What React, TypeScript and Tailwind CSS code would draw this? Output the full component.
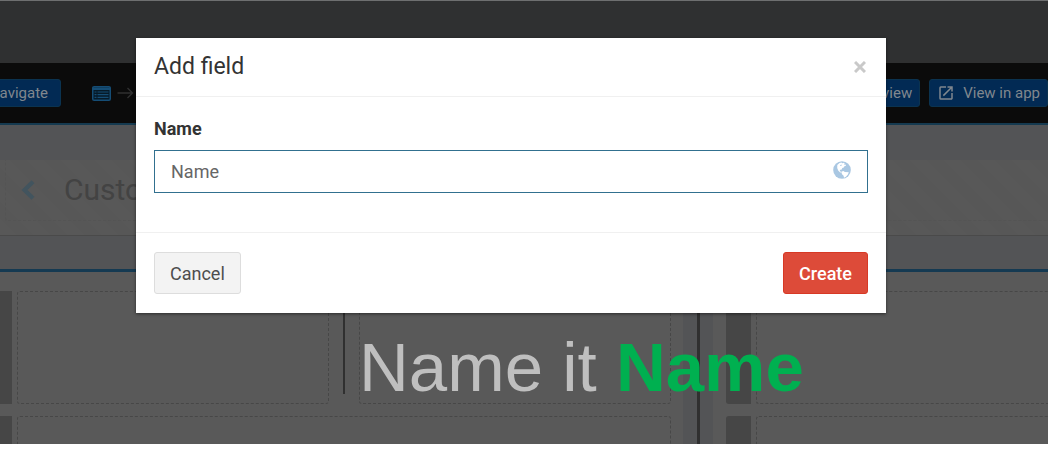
import React from "react";
import { MdOpenInNew } from "react-icons/md";

const toolbarButton =
  "flex h-7 shrink-0 items-center rounded-[3px] border border-[#0b3350] bg-[#022a54] text-[15px] whitespace-nowrap text-[#80878e]";

function ListIcon() {
  return (
    <svg viewBox="0 0 19 15" className="h-[15px] w-[19px] shrink-0" aria-hidden="true">
      <rect x="0.75" y="0.75" width="17.5" height="13.5" rx="1.3" fill="#061a28" stroke="#154d75" strokeWidth="1.5" />
      <path d="M0.5 1.5h18V4H0.5z" fill="#154d75" />
      <path d="M2.5 6h2M5.5 6h11M2.5 8.6h2M5.5 8.6h11M2.5 11.4h2M5.5 11.4h11" stroke="#154d75" strokeWidth="1.1" />
    </svg>
  );
}

function ArrowIcon() {
  return (
    <svg viewBox="0 0 17 14" className="h-3.5 w-[17px] shrink-0" fill="none" stroke="#303030" strokeWidth="1.4" aria-hidden="true">
      <path d="M0.5 7H15.5M10.5 2l5 5-5 5" />
    </svg>
  );
}

function ChevronIcon() {
  return (
    <svg viewBox="0 0 14 20" className="h-5 w-3.5" fill="none" stroke="#42545e" strokeWidth="4.2" aria-hidden="true">
      <path d="M12 1.7L3.5 10l8.500 8.300" />
    </svg>
  );
}

function GlobeIcon() {
  return (
    <svg viewBox="0 0 18 18" className="h-[18px] w-[18px] shrink-0" aria-hidden="true">
      <circle cx="9" cy="9" r="8.800" fill="#a9c7e2" />
      <path
        d="M4.300 4L6.500 2l2-.5.800.8 1.700-.5.700 1-.9 1 1.800-.3.400 1.300-1.600.5-.600 1.300-1.500.4-.6 1.400-1.500.4-.5 1.200 1.300.7.400 1-1.500-.5-1.700-1.700-1-2.500z"
        fill="#fff"
      />
      <path d="M8.300 10.800l2-.7 1.600.8 3.900.4-.9 2.100-2 2.300-1.900 1-.4-1.900-1.600-1.600z" fill="#fff" />
      <path d="M7 4.200l1.500-.6.300.9-1.300.5z" fill="#a9c7e2" />
    </svg>
  );
}

function CloseIcon() {
  return (
    <svg viewBox="0 0 12 12" className="h-3 w-3" fill="none" stroke="#c9c9c9" strokeWidth="3" aria-hidden="true">
      <path d="M1 1l10 10M11 1L1 11" />
    </svg>
  );
}

function Slot({ className = "" }: { className?: string }) {
  return <div className={`min-w-0 flex-1 rounded-[3px] border border-dashed border-[#474747] ${className}`} />;
}

function Toolbar() {
  return (
    <nav className="flex h-[62px] items-center justify-between overflow-hidden border-b-2 border-[#153a50] bg-[#0b0b0b]">
      <div className="flex items-center">
        <button type="button" className={`${toolbarButton} -ml-6 w-[85px] justify-end pr-3`}>
          Navigate
        </button>
        <div className="ml-[31px] flex items-center gap-1.5">
          <ListIcon />
          <ArrowIcon />
        </div>
      </div>
      <div className="flex items-center gap-[9px]">
        <button type="button" className={`${toolbarButton} px-[7px]`}>
          Preview
        </button>
        <button type="button" className={`${toolbarButton} gap-2 px-[7px]`}>
          <MdOpenInNew className="h-[18px] w-[18px]" aria-hidden="true" />
          View in app
        </button>
      </div>
    </nav>
  );
}

function Backdrop() {
  return (
    <div className="flex h-[444px] flex-col overflow-hidden bg-[#595959]">
      <div className="h-[63px] border-t border-[#6e6f70] bg-[#2f3031]" />
      <Toolbar />
      <div className="h-[35px] bg-[#535456]" />
      <header className="flex h-[76px] flex-col border-b border-[#4a4a4a] bg-[#585858] bg-[repeating-linear-gradient(45deg,#585858_0px,#585858_12px,#575757_12px,#575757_24px)] pb-3.5">
        <div className="ml-[5px] flex flex-1 items-center gap-[29px] rounded-bl-[3px] border-b border-l border-dashed border-[#545454] pl-[15px]">
          <ChevronIcon />
          <h1 className="text-[30px] leading-9 text-[#434343]">Custom</h1>
        </div>
      </header>
      <div className="h-9 border-b-[3px] border-[#153a52] bg-[#535456]" />
      <main className="flex min-h-0 flex-1">
        <section className="flex min-w-0 flex-1 flex-col gap-3 pt-[19px] pr-3">
          <div className="flex h-[113px] shrink-0 gap-[5px]">
            <div className="w-3 bg-[#464646]" />
            <div className="flex min-w-0 flex-1">
              <Slot />
              <div className="mx-3.5 mb-2.5 w-0.5 bg-[#303030]" />
              <Slot />
            </div>
          </div>
          <div className="flex h-[113px] shrink-0 gap-[5px]">
            <div className="w-3 bg-[#464646]" />
            <Slot />
          </div>
        </section>
        <div className="flex w-[30px] justify-center bg-[#535456]">
          <div className="w-[3px] bg-[#303030]" />
        </div>
        <section className="flex w-[335px] flex-col gap-3 pt-[19px] pl-[13px]">
          <div className="flex h-[113px] shrink-0 gap-[5px]">
            <div className="w-[25px] rounded-l-[3px] bg-[#464646]" />
            <Slot className="rounded-r-none border-r-0" />
          </div>
          <div className="flex h-[113px] shrink-0 gap-[5px]">
            <div className="w-[25px] rounded-l-[3px] bg-[#464646]" />
            <Slot className="rounded-r-none border-r-0" />
          </div>
        </section>
      </main>
    </div>
  );
}

function AddFieldDialog() {
  return (
    <form
      role="dialog"
      aria-labelledby="dialog-title"
      onSubmit={(event: React.FormEvent) => event.preventDefault()}
      className="w-[750px] bg-white text-[#333333] shadow-[0_1px_3px_rgba(0,0,0,0.5)]"
    >
      <div className="flex h-[59px] items-center justify-between border-b border-[#f0f0f0] pr-5 pl-[18px]">
        <h2 id="dialog-title" className="text-[23px] leading-7">
          Add field
        </h2>
        <button type="button" aria-label="Close">
          <CloseIcon />
        </button>
      </div>
      <div className="px-[18px] pt-5 pb-[39px]">
        <label htmlFor="field-name" className="mb-2.5 block text-[18px] leading-[23px] font-bold">
          Name
        </label>
        <div className="flex h-[43px] items-center border border-[#31708f] pr-4 pl-4">
          <input
            id="field-name"
            type="text"
            placeholder="Name"
            className="min-w-0 flex-1 bg-transparent text-[18px] outline-none placeholder:text-[#666666]"
          />
          <div className="pb-1">
            <GlobeIcon />
          </div>
        </div>
      </div>
      <div className="flex items-center justify-between border-t border-[#f0f0f0] px-[18px] py-[19px]">
        <button type="button" className="h-[42px] rounded-[3px] border border-[#dddddd] bg-[#f3f3f3] px-[15px] text-[18px] text-[#4d4d4d]">
          Cancel
        </button>
        <button type="submit" className="h-[42px] rounded-[3px] border border-[#d73925] bg-[#dd4b39] px-[15px] text-[18px] font-medium text-white">
          Create
        </button>
      </div>
    </form>
  );
}

export default function App() {
  return (
    <div className="relative overflow-hidden bg-white font-['Roboto',sans-serif]">
      <Backdrop />
      <div className="absolute inset-0 flex flex-col items-center pt-[38px] pr-[26px]">
        <AddFieldDialog />
      </div>
      <p className="absolute top-[328px] left-[359px] font-['Liberation_Sans',sans-serif] text-[69px] leading-[80px] whitespace-nowrap text-[#bfbfbf]">
        Name it <strong className="font-bold text-[#00b050]">Name</strong>
      </p>
    </div>
  );
}
